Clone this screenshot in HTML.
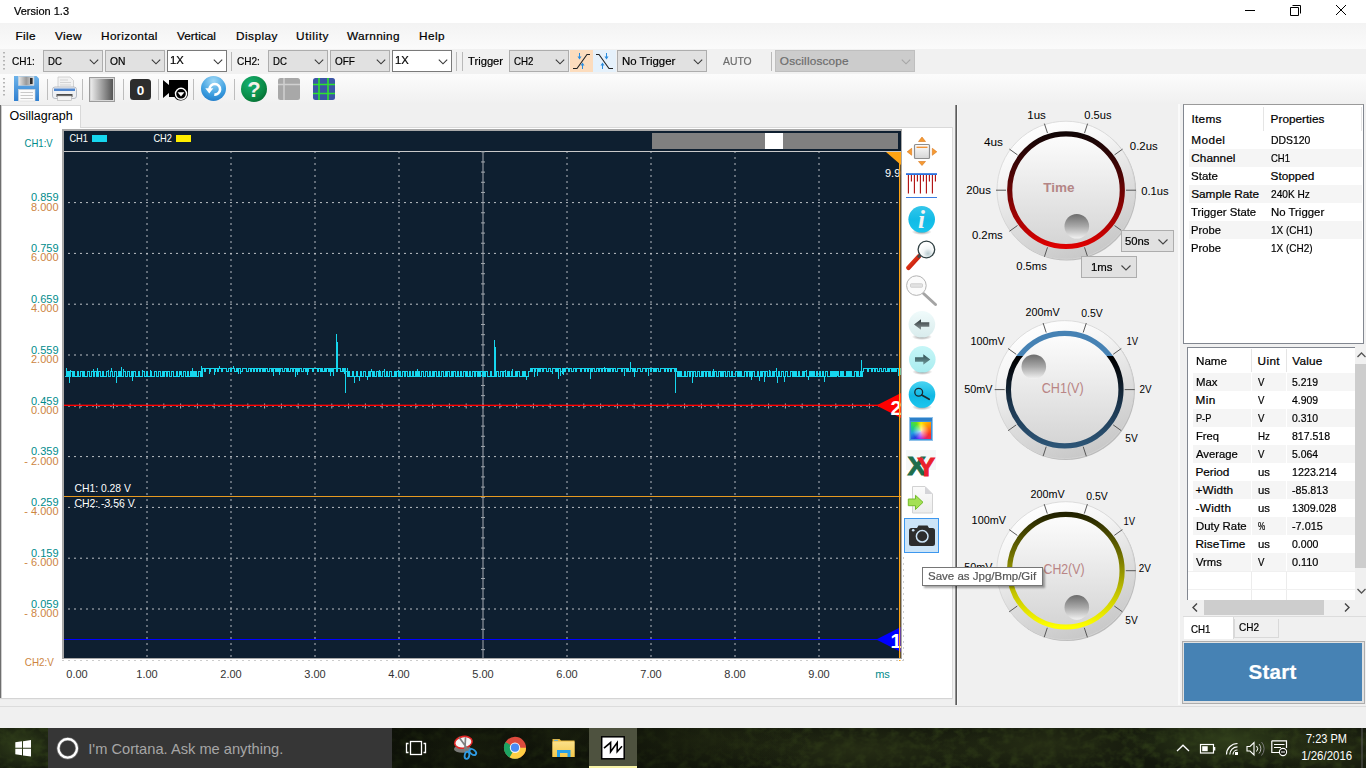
<!DOCTYPE html>
<html>
<head>
<meta charset="utf-8">
<title>Version 1.3</title>
<style>
*{box-sizing:border-box;margin:0;padding:0}
html,body{width:1366px;height:768px;overflow:hidden;background:#f0f0f0;font-family:"Liberation Sans",sans-serif;font-size:12px;color:#000}
.abs{position:absolute}
#root{position:absolute;left:0;top:0;width:1366px;height:768px;overflow:hidden;background:#f0f0f0}
.t{position:absolute;white-space:nowrap;line-height:14px;-webkit-text-stroke:.22px currentColor}
/* title */
#title{left:0;top:0;width:1366px;height:23px;background:#fff}
/* menu */
#menu{left:0;top:23px;width:1366px;height:26px;background:linear-gradient(#f3f3f3,#fbfbfb)}
#menu .t{top:6px;font-size:12.5px;letter-spacing:.45px}
/* toolbar1 */
#tb1{left:0;top:49px;width:1366px;height:25px;background:#f1f1f1}
#tb2{left:0;top:74px;width:1366px;height:30px;background:linear-gradient(#fcfcfc,#f0f0f0)}
.cb{position:absolute;top:1px;height:22px;border:1px solid #adadad;background:#e1e1e1;font-size:12px;line-height:20px;padding-left:4px}
.cb.w{background:#fff;border-color:#7a7a7a;line-height:17px;padding-left:2px}
.cb.dis{background:#cccccc;border-color:#bfbfbf;color:#6d6d6d}
.cb svg{position:absolute;right:3.5px;top:8px}
.sep{position:absolute;width:1px;background:#b9b9b9}
.grip{position:absolute;width:2px;}
</style>
</head>
<body>
<div id="root">

<!-- TITLE BAR -->
<div id="title" class="abs">
<div class="t" style="left:14.3px;top:3.91px;font-size:11.8px;line-height:15px;transform:scaleX(0.9316);transform-origin:0 50%;">Version 1.3</div>
<svg class="abs" style="left:1240px;top:0" width="126" height="23" viewBox="0 0 126 23">
    <path d="M5 10.5H15" stroke="#000" stroke-width="1" fill="none"/>
    <path d="M52.5 5.5H60.5V13.5 M50.5 7.5H58.5V15.5H50.5Z" stroke="#000" stroke-width="1" fill="none"/>
    <path d="M96 5L106 15M106 5L96 15" stroke="#000" stroke-width="1" fill="none"/>
  </svg>
</div>
<div id="menu" class="abs">
<div class="t" style="left:15.5px;top:5.61px;font-size:11.8px;line-height:15px;letter-spacing:0.329px;">File</div>
<div class="t" style="left:55.0px;top:5.61px;font-size:11.8px;line-height:15px;letter-spacing:0.379px;">View</div>
<div class="t" style="left:101.0px;top:5.61px;font-size:11.8px;line-height:15px;letter-spacing:0.375px;">Horizontal</div>
<div class="t" style="left:177.0px;top:5.61px;font-size:11.8px;line-height:15px;letter-spacing:0.043px;">Vertical</div>
<div class="t" style="left:236.0px;top:5.61px;font-size:11.8px;line-height:15px;letter-spacing:0.468px;">Display</div>
<div class="t" style="left:296.0px;top:5.61px;font-size:11.8px;line-height:15px;letter-spacing:0.609px;">Utility</div>
<div class="t" style="left:347.0px;top:5.61px;font-size:11.8px;line-height:15px;letter-spacing:0.348px;">Warnning</div>
<div class="t" style="left:419.0px;top:5.61px;font-size:11.8px;line-height:15px;letter-spacing:0.410px;">Help</div>
</div>
<div id="tb1" class="abs">
<svg class="abs" style="left:3px;top:3px" width="2" height="20"><g fill="#b5b5b5"><rect y="0" width="2" height="1.5"/><rect y="4" width="2" height="1.5"/><rect y="8" width="2" height="1.5"/><rect y="12" width="2" height="1.5"/><rect y="16" width="2" height="1.5"/></g></svg>
<div class="t" style="left:11.9px;top:5.21px;font-size:11.8px;line-height:15px;transform:scaleX(0.8518);transform-origin:0 50%;">CH1:</div>
<div class="cb " style="left:43px;width:60px"><svg width="10" height="6" viewBox="0 0 10 6"><path d="M0.8 0.6L5 4.800L9.200 0.600" stroke="#3a3a3a" stroke-width="1.150" fill="none"/></svg></div><div class="t" style="left:47.8px;top:5.21px;font-size:11.8px;line-height:15px;transform:scaleX(0.8156);transform-origin:0 50%;">DC</div>
<div class="cb " style="left:105px;width:60px"><svg width="10" height="6" viewBox="0 0 10 6"><path d="M0.8 0.6L5 4.800L9.200 0.600" stroke="#3a3a3a" stroke-width="1.150" fill="none"/></svg></div><div class="t" style="left:109.8px;top:5.21px;font-size:11.8px;line-height:15px;transform:scaleX(0.8701);transform-origin:0 50%;">ON</div>
<div class="cb w" style="left:167px;width:60px"><svg width="10" height="6" viewBox="0 0 10 6"><path d="M0.8 0.6L5 4.800L9.200 0.600" stroke="#3a3a3a" stroke-width="1.150" fill="none"/></svg></div><div class="t" style="left:170.3px;top:3.81px;font-size:11.8px;line-height:15px;transform:scaleX(0.9492);transform-origin:0 50%;">1X</div>
<div class="sep" style="left:231px;top:3px;height:19px"></div>
<div class="t" style="left:237.0px;top:5.21px;font-size:11.8px;line-height:15px;transform:scaleX(0.8518);transform-origin:0 50%;">CH2:</div>
<div class="cb " style="left:268px;width:60px"><svg width="10" height="6" viewBox="0 0 10 6"><path d="M0.8 0.6L5 4.800L9.200 0.600" stroke="#3a3a3a" stroke-width="1.150" fill="none"/></svg></div><div class="t" style="left:272.8px;top:5.21px;font-size:11.8px;line-height:15px;transform:scaleX(0.8156);transform-origin:0 50%;">DC</div>
<div class="cb " style="left:330px;width:60px"><svg width="10" height="6" viewBox="0 0 10 6"><path d="M0.8 0.6L5 4.800L9.200 0.600" stroke="#3a3a3a" stroke-width="1.150" fill="none"/></svg></div><div class="t" style="left:334.8px;top:5.21px;font-size:11.8px;line-height:15px;transform:scaleX(0.8434);transform-origin:0 50%;">OFF</div>
<div class="cb w" style="left:392px;width:60px"><svg width="10" height="6" viewBox="0 0 10 6"><path d="M0.8 0.6L5 4.800L9.200 0.600" stroke="#3a3a3a" stroke-width="1.150" fill="none"/></svg></div><div class="t" style="left:395.3px;top:3.81px;font-size:11.8px;line-height:15px;transform:scaleX(0.9492);transform-origin:0 50%;">1X</div>
<div class="sep" style="left:456px;top:3px;height:19px"></div><div class="sep" style="left:462px;top:3px;height:19px"></div>
<div class="t" style="left:468.3px;top:5.21px;font-size:11.8px;line-height:15px;transform:scaleX(0.9502);transform-origin:0 50%;">Trigger</div>
<div class="cb " style="left:509px;width:60px"><svg width="10" height="6" viewBox="0 0 10 6"><path d="M0.8 0.6L5 4.800L9.200 0.600" stroke="#3a3a3a" stroke-width="1.150" fill="none"/></svg></div><div class="t" style="left:513.8px;top:5.21px;font-size:11.8px;line-height:15px;transform:scaleX(0.8218);transform-origin:0 50%;">CH2</div>
<div class="abs" style="left:570px;top:1px;width:23px;height:22px;background:#fcdcbd"></div>
  <div class="abs" style="left:593px;top:1px;width:23px;height:22px;background:#e5f1fb"></div>
  <svg class="abs" style="left:570px;top:1px" width="46" height="22" viewBox="0 0 46 22">
    <path d="M3 18.5H7L17 4.5H20" stroke="#222" stroke-width="1.1" fill="none"/>
    <path d="M9.5 3V8M12.5 19V14" stroke="#2a8de0" stroke-width="1" fill="none"/>
    <path d="M7.5 6.5L9.5 9.5L11.5 6.5Z M10.5 15.5L12.5 12.5L14.5 15.5Z" fill="#2a8de0"/>
    <path d="M26 4.5H29L39 18.5H43" stroke="#222" stroke-width="1.1" fill="none"/>
    <path d="M36.500 3V8M32.500 19V14" stroke="#2a8de0" stroke-width="1" fill="none"/>
    <path d="M34.500 6.500L36.500 9.500L38.500 6.500Z M30.500 15.500L32.500 12.500L34.500 15.500Z" fill="#2a8de0"/>
  </svg>
<div class="cb " style="left:617px;width:90px"><svg width="10" height="6" viewBox="0 0 10 6"><path d="M0.8 0.6L5 4.800L9.200 0.600" stroke="#3a3a3a" stroke-width="1.150" fill="none"/></svg></div><div class="t" style="left:621.8px;top:5.21px;font-size:11.8px;line-height:15px;transform:scaleX(0.9675);transform-origin:0 50%;">No Trigger</div>
<div class="t" style="left:723.1px;top:5.21px;font-size:11.8px;line-height:15px;transform:scaleX(0.8813);transform-origin:0 50%;color:#6d6d6d;">AUTO</div>
<div class="sep" style="left:771px;top:3px;height:19px"></div>
<div class="cb dis" style="left:775px;width:140px"><svg width="10" height="6" viewBox="0 0 10 6"><path d="M0.8 0.6L5 4.800L9.200 0.600" stroke="#a6a6a6" stroke-width="1.150" fill="none"/></svg></div><div class="t" style="left:779.8px;top:5.21px;font-size:11.8px;line-height:15px;letter-spacing:0.173px;color:#6d6d6d;">Oscilloscope</div>
</div>
<!-- TOOLBAR 2 -->
<div id="tb2" class="abs">
  <svg class="abs" style="left:0;top:0" width="345" height="30" viewBox="0 74 345 30">
    <defs>
      <linearGradient id="gsave" x1="0" y1="0" x2="0" y2="1"><stop offset="0" stop-color="#6db3ea"/><stop offset="1" stop-color="#2f7fd0"/></linearGradient>
      <linearGradient id="ggrey" x1="0" y1="0" x2="1" y2="0"><stop offset="0" stop-color="#f4f4f4"/><stop offset="1" stop-color="#4a4a4a"/></linearGradient>
      <linearGradient id="gmetal" x1="0" y1="0" x2="1" y2="0"><stop offset="0" stop-color="#e8e8e8"/><stop offset=".5" stop-color="#9a9a9a"/><stop offset="1" stop-color="#e0e0e0"/></linearGradient>
      <radialGradient id="gblue" cx=".5" cy=".2" r=".9"><stop offset="0" stop-color="#9fd8f6"/><stop offset=".6" stop-color="#3d9fe0"/><stop offset="1" stop-color="#1b74c4"/></radialGradient>
      <radialGradient id="ggreen" cx=".35" cy=".3" r=".8"><stop offset="0" stop-color="#14b070"/><stop offset=".7" stop-color="#0a8a45"/><stop offset="1" stop-color="#056a30"/></radialGradient>
    </defs>
    <g fill="#b5b5b5"><rect x="3" y="78" width="2" height="1.5"/><rect x="3" y="82" width="2" height="1.5"/><rect x="3" y="86" width="2" height="1.5"/><rect x="3" y="90" width="2" height="1.5"/><rect x="3" y="94" width="2" height="1.5"/></g>
    <!-- save -->
    <path d="M14 76H36.500L39 78.500V101H14Z" fill="url(#gsave)"/>
    <rect x="18.500" y="76.500" width="15.500" height="9" fill="url(#gmetal)" stroke="#cfd8e0" stroke-width=".5"/>
    <rect x="30" y="78" width="2.600" height="6" fill="#2b2b2b"/>
    <rect x="18.500" y="89.500" width="16.500" height="11.500" fill="#fbfbfb" stroke="#d5d5d5" stroke-width=".6"/>
    <path d="M20.500 92.500H33M20.500 95.500H33M20.500 98.500H33" stroke="#c9c9c9" stroke-width="1"/>
    <!-- printer -->
    <path d="M58 77H70L73.500 80.500V88H58Z" fill="#f2f2f2" stroke="#c4c4c4" stroke-width=".7"/>
    <path d="M60 80H68M60 82.500H71M60 85H71" stroke="#d4d4d4" stroke-width="1"/>
    <rect x="52.500" y="87" width="24" height="11.500" rx="2.500" fill="#eef0f3" stroke="#a9b0ba" stroke-width=".8"/>
    <rect x="54" y="88.500" width="21" height="2.500" fill="#4f86cf"/>
    <rect x="56.500" y="94" width="16" height="3" fill="#4c4c4c"/>
    <rect x="57.500" y="96" width="14" height="4.500" fill="#f4f4f4" stroke="#b5b5b5" stroke-width=".6"/>
    <!-- gradient square -->
    <rect x="89.500" y="77.500" width="25" height="24" fill="url(#ggrey)" stroke="#9c9c9c" stroke-width="1"/>
    <rect x="90.500" y="78.500" width="23" height="22" fill="none" stroke="#d9d9d9" stroke-width="1"/>
    <!-- 0 -->
    <rect x="130" y="79" width="21" height="21" rx="3.500" fill="#2d2d2d"/>
    <text x="140.500" y="94.500" font-family="Liberation Sans, sans-serif" font-size="13.500" font-weight="bold" fill="#fff" text-anchor="middle">0</text>
    <!-- camera -->
    <path d="M163 80L169 85V80H188V93A7 7 0 0 1 181 100.500A7 7 0 0 1 174.500 97H169V93L163 98Z" fill="#000"/>
    <circle cx="181" cy="93.800" r="5.500" fill="#000" stroke="#fff" stroke-width="1.400"/>
    <path d="M177.600 92.200H184.400L181 96.600Z" fill="#fff"/>
    <!-- refresh -->
    <circle cx="213.500" cy="88.500" r="12.500" fill="url(#gblue)"/>
    <path d="M209.500 89.500A5.300 5.300 0 1 1 214.300 94.600" stroke="#fff" stroke-width="2.600" fill="none"/>
    <path d="M205.300 88.300H213.300L209.300 93.600Z" fill="#fff"/>
    <!-- help -->
    <circle cx="254" cy="89" r="13" fill="url(#ggreen)"/>
    <text x="254" y="96.500" font-family="Liberation Sans, sans-serif" font-size="22" font-weight="bold" fill="#f4f1ea" text-anchor="middle">?</text>
    <!-- table -->
    <rect x="278" y="78" width="22" height="22" rx="2.500" fill="#a8a8a8"/>
    <path d="M278 84.500H300M284 78V100" stroke="#d0d0d0" stroke-width="1.500"/>
    <!-- grid -->
    <rect x="313" y="78" width="22" height="22" rx="2.500" fill="#3b55a6"/>
    <path d="M313 84.500H335M313 93.500H335M319 78V100M328 78V100" stroke="#2ee22e" stroke-width="1.600"/>
    <!-- seps -->
    <path d="M47.500 79V100M82.500 79V100M123.500 79V100M158.500 79V100M193.500 79V100M234.500 79V100" stroke="#bdbdbd" stroke-width="1"/>
  </svg>
</div>

<!-- MAIN LEFT -->
<div id="left" class="abs" style="left:0;top:104px;width:956px;height:601px">
<svg class="abs" style="left:0;top:0" width="956" height="601" viewBox="0 104 956 601" shape-rendering="crispEdges">
<rect x="0" y="127" width="956" height="578" fill="#fff"/>
<rect x="0" y="104" width="956" height="23" fill="#f0f0f0"/>
<rect x="2" y="105" width="78" height="23" fill="#fff"/>
<path d="M80.500 105V127.500H952" stroke="#d9d9d9" stroke-width="1" fill="none"/>
<path d="M2 105.500H80" stroke="#d9d9d9" stroke-width="1" fill="none"/>
<rect x="0" y="105" width="1" height="595" fill="#6e6e6e"/><rect x="1" y="105" width="1" height="595" fill="#cfcfcf"/>
<rect x="0" y="698" width="955" height="1" fill="#d4d4d4"/><rect x="0" y="699" width="955" height="1" fill="#ececec"/><rect x="0" y="700" width="956" height="5" fill="#f0f0f0"/>
<rect x="952" y="127" width="1" height="572" fill="#dcdcdc"/><rect x="953" y="104" width="3" height="601" fill="#f0f0f0"/><rect x="955" y="105" width="1" height="601" fill="#8e8e8e"/>
<rect x="62" y="129" width="840" height="530" fill="#a9a9a9"/>
<rect x="64" y="131" width="837" height="527" fill="#0e1f30"/>
<clipPath id="pc"><rect x="64" y="131" width="837" height="527"/></clipPath>
<g clip-path="url(#pc)">
<g shape-rendering="auto">
<path d="M147 151V660" stroke="#b4b9bf" stroke-width="1" stroke-dasharray="2 4" fill="none"/>
<path d="M231 151V660" stroke="#b4b9bf" stroke-width="1" stroke-dasharray="2 4" fill="none"/>
<path d="M315 151V660" stroke="#b4b9bf" stroke-width="1" stroke-dasharray="2 4" fill="none"/>
<path d="M399 151V660" stroke="#b4b9bf" stroke-width="1" stroke-dasharray="2 4" fill="none"/>
<path d="M567 151V660" stroke="#b4b9bf" stroke-width="1" stroke-dasharray="2 4" fill="none"/>
<path d="M651 151V660" stroke="#b4b9bf" stroke-width="1" stroke-dasharray="2 4" fill="none"/>
<path d="M735 151V660" stroke="#b4b9bf" stroke-width="1" stroke-dasharray="2 4" fill="none"/>
<path d="M819 151V660" stroke="#b4b9bf" stroke-width="1" stroke-dasharray="2 4" fill="none"/>
<path d="M62 202.6H900" stroke="#bcc0c5" stroke-width="1" stroke-dasharray="2 4" fill="none"/>
<path d="M62 253.4H900" stroke="#bcc0c5" stroke-width="1" stroke-dasharray="2 4" fill="none"/>
<path d="M62 304.2H900" stroke="#bcc0c5" stroke-width="1" stroke-dasharray="2 4" fill="none"/>
<path d="M62 355.0H900" stroke="#bcc0c5" stroke-width="1" stroke-dasharray="2 4" fill="none"/>
<path d="M62 456.6H900" stroke="#bcc0c5" stroke-width="1" stroke-dasharray="2 4" fill="none"/>
<path d="M62 507.4H900" stroke="#bcc0c5" stroke-width="1" stroke-dasharray="2 4" fill="none"/>
<path d="M62 558.2H900" stroke="#bcc0c5" stroke-width="1" stroke-dasharray="2 4" fill="none"/>
<path d="M62 609.0H900" stroke="#bcc0c5" stroke-width="1" stroke-dasharray="2 4" fill="none"/>
</g>
<rect x="64" y="151" width="837" height="1" fill="#c9c9c9"/>
<g shape-rendering="auto">
<path d="M483 152V660" stroke="#a6abb2" stroke-width="1" fill="none"/>
<path d="M481 151.80H485M481 161.96H485M481 172.12H485M481 182.28H485M481 192.44H485M481 202.60H485M481 212.76H485M481 222.92H485M481 233.08H485M481 243.24H485M481 253.40H485M481 263.56H485M481 273.72H485M481 283.88H485M481 294.04H485M481 304.20H485M481 314.36H485M481 324.52H485M481 334.68H485M481 344.84H485M481 355.00H485M481 365.16H485M481 375.32H485M481 385.48H485M481 395.64H485M481 405.80H485M481 415.96H485M481 426.12H485M481 436.28H485M481 446.44H485M481 456.60H485M481 466.76H485M481 476.92H485M481 487.08H485M481 497.24H485M481 507.40H485M481 517.56H485M481 527.72H485M481 537.88H485M481 548.04H485M481 558.20H485M481 568.36H485M481 578.52H485M481 588.68H485M481 598.84H485M481 609.00H485M481 619.16H485M481 629.32H485M481 639.48H485M481 649.64H485M481 659.80H485" stroke="#a2a8af" stroke-width="1" fill="none"/>
<path d="M63.00 403.5V408.500M79.80 403.5V408.500M96.60 403.5V408.500M113.40 403.5V408.500M130.20 403.5V408.500M147.00 403.5V408.500M163.80 403.5V408.500M180.60 403.5V408.500M197.40 403.5V408.500M214.20 403.5V408.500M231.00 403.5V408.500M247.80 403.5V408.500M264.60 403.5V408.500M281.40 403.5V408.500M298.20 403.5V408.500M315.00 403.5V408.500M331.80 403.5V408.500M348.60 403.5V408.500M365.40 403.5V408.500M382.20 403.5V408.500M399.00 403.5V408.500M415.80 403.5V408.500M432.60 403.5V408.500M449.40 403.5V408.500M466.20 403.5V408.500M483.00 403.5V408.500M499.80 403.5V408.500M516.60 403.5V408.500M533.40 403.5V408.500M550.20 403.5V408.500M567.00 403.5V408.500M583.80 403.5V408.500M600.60 403.5V408.500M617.40 403.5V408.500M634.20 403.5V408.500M651.00 403.5V408.500M667.80 403.5V408.500M684.60 403.5V408.500M701.40 403.5V408.500M718.20 403.5V408.500M735.00 403.5V408.500M751.80 403.5V408.500M768.60 403.5V408.500M785.40 403.5V408.500M802.20 403.5V408.500M819.00 403.5V408.500M835.80 403.5V408.500M852.60 403.5V408.500M869.40 403.5V408.500M886.20 403.5V408.500M903.00 403.5V408.500" stroke="#a8adb4" stroke-width="1" fill="none"/>
<path d="M62 406.300H900" stroke="#9298a0" stroke-width="1" stroke-dasharray="2 4" fill="none"/>
</g>
<rect x="64" y="404" width="837" height="1" fill="#ff0000" opacity=".35"/><rect x="64" y="405" width="837" height="1" fill="#ff0000"/>
<rect x="64" y="496" width="837" height="1" fill="#e79a21"/>
<rect x="64" y="639" width="837" height="1.300" fill="#0000ff"/>
<rect x="652" y="133" width="246" height="16" fill="#808080"/><rect x="765" y="133" width="18" height="16" fill="#fff"/>
<path d="M64.5 376.5V376.5H65.5H66.5V371.5V367.5V371.5H67.5V376.5H68.5V371.5H69.5V376.5V382.5V376.5H70.5V371.5V369.5V371.5H71.5H72.5V376.5H73.5V371.5H74.5V376.5H75.5H76.5H77.5V371.5V375.5V371.5H78.5V376.5H79.5H80.5V371.5H81.5H82.5V376.5H83.5V371.5H84.5V376.5H85.5H86.5H87.5V371.5H88.5H89.5V376.5H90.5H91.5V371.5H92.5H93.5V376.5V368.5V376.5H94.5V371.5H95.5H96.5V376.5H97.5V367.5V376.5H98.5V371.5H99.5H100.5V376.5H101.5H102.5V371.5H103.5V376.5H104.5H105.5H106.5V371.5H107.5H108.5V376.5V369.5V376.5H109.5H110.5V371.5H111.5V367.5V371.5H112.5V376.5H113.5H114.5V371.5H115.5H116.5V376.5V382.5V376.5H117.5H118.5V371.5H119.5V376.5H120.5V371.5H121.5V376.5V366.5V376.5H122.5H123.5V371.5V368.5V371.5H124.5H125.5V376.5H126.5H127.5V371.5H128.5H129.5V376.5H130.5H131.5V371.5H132.5V376.5V380.5V376.5H133.5V371.5H134.5H135.5V376.5H136.5H137.5H138.5V371.5H139.5V376.5H140.5H141.5H142.5V371.5V369.5V371.5H143.5H144.5V376.5H145.5H146.5V371.5H147.5V376.5H148.5H149.5H150.5V371.5V369.5V371.5H151.5V376.5H152.5H153.5H154.5V371.5H155.5H156.5V376.5H157.5H158.5V371.5H159.5H160.5V376.5H161.5H162.5V371.5H163.5V376.5H164.5V371.5H165.5H166.5V376.5H167.5V371.5H168.5H169.5V376.5H170.5H171.5V371.5H172.5H173.5V376.5H174.5H175.5H176.5V371.5H177.5V376.5H178.5H179.5V371.5H180.5V374.5V371.5H181.5V376.5H182.5H183.5V371.5H184.5H185.5V376.5H186.5H187.5V371.5H188.5V376.5H189.5H190.5V371.5H191.5V376.5H192.5V367.5V376.5H193.5V371.5H194.5V376.5H195.5V371.5H196.5V376.5H197.5H198.5V371.5H199.5H200.5V376.5H201.5V371.5V366V371.5H202.5V368.5V376.5V368.5H203.5H204.5V371.5H205.5V368.5H206.5H207.5H208.5H209.5V371.5V373.5V371.5H210.5V368.5H211.5H212.5H213.5H214.5V371.5V374.5V371.5H215.5V368.5H216.5H217.5V371.5H218.5V368.5H219.5V365.5V368.5H220.5H221.5V371.5H222.5V368.5H223.5H224.5H225.5H226.5V371.5H227.5H228.5V368.5H229.5H230.5V371.5H231.5V368.5H232.5H233.5V365.5V368.5H234.5V371.5H235.5H236.5V368.5H237.5V371.5H238.5V368.5V373.5V368.5H239.5H240.5V371.5V373.5V371.5H241.5H242.5V368.5H243.5H244.5H245.5H246.5V371.5H247.5H248.5V368.5H249.5H250.5V371.5H251.5V368.5H252.5H253.5V371.5H254.5V368.5H255.5H256.5V371.5H257.5V368.5H258.5H259.5V371.5H260.5V368.5H261.5H262.5V371.5H263.5V368.5H264.5V371.5H265.5V368.5H266.5H267.5V371.5H268.5H269.5V368.5H270.5H271.5V371.5H272.5V368.5H273.5V375.5V368.5H274.5H275.5V371.5H276.5V368.5H277.5V371.5H278.5V368.5H279.5V371.5V374.5V371.5H280.5V368.5H281.5H282.5V371.5H283.5H284.5V368.5H285.5H286.5V371.5H287.5V368.5H288.5V371.5H289.5H290.5V368.5H291.5H292.5V371.5H293.5V368.5H294.5H295.5V371.5V376.5V371.5H296.5V368.5H297.5V374.5V368.5H298.5V371.5H299.5V368.5V367.5V368.5H300.5H301.5V371.5H302.5H303.5V368.5H304.5H305.5V371.5H306.5V368.5H307.5V371.5V374.5V371.5H308.5V368.5H309.5H310.5H311.5H312.5V371.5H313.5V368.5H314.5H315.5H316.5H317.5V371.5H318.5V368.5H319.5H320.5V371.5H321.5V368.5H322.5V371.5H323.5H324.5V368.5H325.5V371.5H326.5V368.5H327.5H328.5V371.5H329.5V368.5H330.5V375.5V368.5H331.5V371.5H332.5V368.5H333.5V375.5V368.5H334.5H335.5H336.5V371.5V333.5V371.5H337.5V368.5V341.5V368.5H338.5H339.5H340.5V371.5H341.5H342.5V368.5H343.5V371.5H344.5V368.5V373.5V368.5H345.5V371.5V392.5V371.5H346.5H347.5V376.5V367.5V376.5H348.5V371.5H349.5V376.5H350.5H351.5H352.5V371.5H353.5V376.5H354.5V382.5V376.5H355.5H356.5V371.5H357.5V376.5H358.5H359.5V380.5V376.5H360.5V371.5V375.5V371.5H361.5V376.5H362.5H363.5V371.5H364.5H365.5V376.5H366.5H367.5V379.5V376.5H368.5V371.5H369.5V376.5H370.5V371.5H371.5V368.5V371.5H372.5V376.5H373.5V371.5H374.5V376.5H375.5H376.5V371.5H377.5H378.5V376.5H379.5V371.5V369.5V371.5H380.5V376.5H381.5H382.5V371.5H383.5H384.5V376.5V368.5V376.5H385.5H386.5V371.5H387.5V376.5H388.5H389.5V371.5H390.5H391.5V376.5H392.5H393.5H394.5V371.5H395.5V376.5H396.5V371.5H397.5H398.5V376.5V369.5V376.5H399.5V371.5H400.5V376.5H401.5H402.5V371.5H403.5H404.5V376.5H405.5V371.5H406.5H407.5V376.5H408.5H409.5V371.5H410.5V376.5H411.5H412.5V371.5H413.5V376.5H414.5H415.5V371.5H416.5V376.5H417.5V368.5V376.5H418.5V371.5H419.5V376.5H420.5H421.5V371.5H422.5H423.5V376.5H424.5H425.5V371.5H426.5H427.5V376.5H428.5H429.5V371.5H430.5V376.5H431.5H432.5V371.5H433.5V376.5H434.5V371.5H435.5H436.5V376.5H437.5H438.5V371.5H439.5V376.5H440.5H441.5V371.5H442.5H443.5V376.5H444.5H445.5V371.5H446.5V376.5H447.5V371.5H448.5H449.5V376.5H450.5H451.5V371.5H452.5V376.5H453.5V371.5H454.5H455.5V376.5H456.5H457.5V371.5H458.5V376.5H459.5H460.5V371.5H461.5V376.5H462.5H463.5V371.5H464.5H465.5V376.5H466.5V371.5H467.5V376.5H468.5H469.5V371.5H470.5V376.5H471.5H472.5V371.5H473.5H474.5V376.5H475.5V371.5H476.5H477.5V376.5H478.5V371.5H479.5V376.5H480.5V371.5H481.5H482.5V376.5H483.5V371.5H484.5V376.5H485.5V371.5H486.5H487.5V376.5H488.5H489.5H490.5V371.5H491.5V376.5H492.5H493.5H494.5V371.5V339.5V371.5H495.5V376.5V346.5V376.5H496.5V371.5H497.5H498.5V376.5H499.5H500.5V371.5H501.5H502.5V376.5H503.5V371.5V375.5V371.5H504.5H505.5V376.5V369.5V376.5H506.5H507.5V371.5H508.5V376.5V371.5H509.5V376.5H510.5H511.5V371.5H512.5V376.5V368.5V376.5H513.5H514.5H515.5V371.5H516.5V376.5H517.5V371.5H518.5H519.5V376.5H520.5H521.5H522.5V371.5H523.5V376.5H524.5V371.5H525.5V376.5H526.5V379.5V376.5H527.5H528.5V371.5H529.5H530.5V368.5H531.5V371.5H532.5V368.5H533.5H534.5V371.5V376.5V371.5H535.5V368.5H536.5H537.5V371.5V375.5V371.5H538.5V368.5H539.5V371.5H540.5V368.5H541.5H542.5V371.5H543.5V368.5H544.5H545.5H546.5V371.5H547.5H548.5V368.5H549.5H550.5V371.5H551.5H552.5V368.5V373.5V368.5H553.5H554.5H555.5V371.5H556.5V368.5H557.5V371.5H558.5V368.5V378.5V368.5H559.5H560.5V371.5V375.5V371.5H561.5H562.5V368.5V373.5V368.5H563.5V374.5V368.5H564.5V371.5H565.5V368.5H566.5H567.5H568.5V371.5H569.5V368.5H570.5H571.5V371.5H572.5H573.5V368.5H574.5H575.5V371.5H576.5V368.5H577.5H578.5H579.5H580.5V371.5H581.5V368.5H582.5H583.5H584.5V371.5H585.5V368.5H586.5H587.5V371.5H588.5V368.5H589.5H590.5V378.5V368.5H591.5V371.5H592.5V368.5H593.5H594.5V371.5H595.5H596.5V368.5H597.5H598.5V371.5H599.5V368.5H600.5H601.5V371.5H602.5V368.5H603.5H604.5V371.5V366.5V371.5H605.5V368.5H606.5H607.5V371.5H608.5V368.5H609.5V371.5H610.5V368.5H611.5H612.5V371.5H613.5V368.5H614.5H615.5V371.5H616.5H617.5V368.5H618.5H619.5H620.5H621.5V371.5H622.5V368.5H623.5H624.5V375.5V368.5H625.5H626.5V371.5H627.5V368.5H628.5V371.5H629.5H630.5V368.5V361.5V368.5H631.5H632.5V371.5H633.5V368.5H634.5V376.5V368.5H635.5V371.5H636.5H637.5V368.5H638.5H639.5H640.5V371.5H641.5H642.5V368.5H643.5H644.5H645.5V371.5H646.5V368.5H647.5H648.5V375.5V368.5H649.5H650.5V371.5H651.5V368.5H652.5H653.5V371.5H654.5V368.5H655.5V371.5H656.5V368.5H657.5V367.5V368.5H658.5V371.5H659.5H660.5V368.5H661.5H662.5H663.5H664.5V371.5H665.5V368.5H666.5H667.5V371.5H668.5V368.5H669.5H670.5V371.5H671.5V368.5H672.5H673.5H674.5V371.5H675.5V368.5V392.5V368.5H676.5V371.5H677.5V376.5H678.5V371.5H679.5V376.5H680.5V371.5H681.5V376.5H682.5H683.5H684.5V371.5V374.5V371.5H685.5V376.5H686.5H687.5V371.5H688.5H689.5V376.5H690.5V371.5H691.5H692.5V376.5V382.5V376.5H693.5V371.5H694.5H695.5V376.5H696.5H697.5V371.5H698.5H699.5V376.5H700.5H701.5V371.5V375.5V371.5H702.5V376.5H703.5V371.5H704.5H705.5V376.5H706.5V371.5H707.5H708.5V376.5H709.5V371.5H710.5V376.5H711.5H712.5V371.5H713.5V376.5V368.5V376.5H714.5V371.5H715.5H716.5V376.5H717.5H718.5V371.5H719.5H720.5V376.5H721.5V371.5H722.5V376.5H723.5V371.5H724.5H725.5V376.5H726.5H727.5V371.5H728.5H729.5V376.5H730.5H731.5V371.5H732.5V376.5H733.5H734.5H735.5V371.5H736.5H737.5V376.5H738.5V371.5H739.5V376.5H740.5V371.5H741.5V376.5H742.5H743.5H744.5V371.5H745.5H746.5V376.5H747.5V371.5H748.5H749.5V376.5H750.5V371.5H751.5V376.5V379.5V376.5H752.5V371.5H753.5H754.5V376.5H755.5H756.5H757.5V371.5H758.5V376.5H759.5V380.5V376.5H760.5V371.5H761.5V376.5H762.5V371.5H763.5H764.5V376.5V381.5V376.5H765.5V371.5H766.5H767.5V376.5H768.5H769.5V371.5V369.5V371.5H770.5V376.5H771.5H772.5V371.5V375.5V371.5H773.5V376.5H774.5V371.5H775.5H776.5V376.5V367.5V376.5H777.5V382.5V376.5H778.5V371.5H779.5V376.5H780.5H781.5V371.5H782.5H783.5V376.5H784.5V381.5V376.5H785.5V371.5H786.5H787.5V376.5H788.5H789.5H790.5V371.5H791.5H792.5V376.5H793.5V371.5H794.5V376.5H795.5V371.5H796.5V376.5H797.5H798.5V371.5H799.5V376.5H800.5H801.5H802.5V371.5H803.5V376.5H804.5V371.5H805.5H806.5V376.5V369.5V376.5H807.5H808.5V379.5V376.5H809.5V371.5H810.5V376.5H811.5V371.5V374.5V371.5H812.5V376.5H813.5V371.5H814.5V376.5H815.5H816.5V371.5H817.5V376.5H818.5H819.5V371.5V374.5V371.5H820.5V376.5H821.5H822.5V371.5H823.5V376.5H824.5V381.5V376.5H825.5V371.5V376.5V371.5H826.5H827.5V376.5H828.5H829.5H830.5V371.5H831.5V376.5H832.5V371.5H833.5V376.5H834.5V371.5H835.5V376.5H836.5V371.5H837.5V375.5V371.5H838.5V376.5H839.5H840.5V371.5H841.5V376.5H842.5V371.5H843.5V376.5H844.5H845.5H846.5V371.5H847.5V376.5H848.5V371.5H849.5V376.5H850.5V371.5H851.5V376.5H852.5H853.5H854.5V371.5H855.5H856.5V376.5H857.5V371.5H858.5V376.5H859.5H860.5V371.5H861.5V376.5V359.5V376.5H862.5V371.5H863.5V368.5H864.5H865.5H866.5H867.5V371.5H868.5V368.5H869.5H870.5H871.5V371.5H872.5V368.5H873.5H874.5V371.5H875.5V368.5H876.5H877.5V371.5H878.5H879.5V368.5H880.5H881.5V371.5H882.5H883.5V368.5H884.5H885.5V371.5H886.5H887.5V368.5H888.5V371.5H889.5V368.5H890.5H891.5V371.5H892.5V368.5H893.5V371.5H894.5V368.5H895.5V371.5H896.5V368.5H897.5H898.5V375.5V368.5H899.5H900.5V371.5V374.5V371.5H901.5" stroke="#16d6ee" stroke-width="1" fill="none"/>
</g>
</svg>
<svg class="abs" style="left:0;top:0" width="956" height="601" viewBox="0 104 956 601">
<clipPath id="pc2"><rect x="64" y="131" width="837" height="527"/></clipPath><g clip-path="url(#pc2)">
<path d="M886 152H901V165Z" fill="#ffa414"/>
<path d="M876.400 405.600L901 393V418Z" fill="#ff0000"/>
<path d="M876.200 639.600L901 627V652Z" fill="#0000ff"/>
<text x="890.500" y="414.700" font-family="Liberation Sans, sans-serif" font-size="20" font-weight="bold" fill="#fff">2</text>
<text x="890.500" y="648" font-family="Liberation Sans, sans-serif" font-size="20" font-weight="bold" fill="#fff">1</text>
<text x="885" y="177" font-family="Liberation Sans, sans-serif" font-size="11" fill="#fff">9.9</text>
<rect x="899" y="152" width="1.400" height="507" fill="#ffa414"/>
</g>
<text x="69.4" y="142.3" font-family="Liberation Sans, sans-serif" font-size="10.5" textLength="18.5" lengthAdjust="spacingAndGlyphs" fill="#fff" text-anchor="start">CH1</text><rect x="92" y="135" width="15" height="7" fill="#16d6ee"/>
<text x="153.4" y="142.3" font-family="Liberation Sans, sans-serif" font-size="10.5" textLength="18.6" lengthAdjust="spacingAndGlyphs" fill="#fff" text-anchor="start">CH2</text><rect x="176" y="135" width="15" height="7" fill="#ffee00"/>
<text x="74.5" y="491.5" font-family="Liberation Sans, sans-serif" font-size="10.5" textLength="56.3" lengthAdjust="spacingAndGlyphs" fill="#fff" text-anchor="start">CH1: 0.28 V</text>
<text x="74.5" y="507.0" font-family="Liberation Sans, sans-serif" font-size="10.5" letter-spacing="-0.045" fill="#fff" text-anchor="start">CH2: -3.56 V</text>
<text x="24.6" y="147.0" font-family="Liberation Sans, sans-serif" font-size="10.5" textLength="28.1" lengthAdjust="spacingAndGlyphs" fill="#008b8b" text-anchor="start">CH1:V</text>
<text x="24.8" y="665.8" font-family="Liberation Sans, sans-serif" font-size="10.5" textLength="29.0" lengthAdjust="spacingAndGlyphs" fill="#cd853f" text-anchor="start">CH2:V</text>
<text x="58.500" y="201.4" text-anchor="end" font-family="Liberation Sans, sans-serif" font-size="11" fill="#008b8b">0.859</text>
<text x="58.500" y="210.5" text-anchor="end" font-family="Liberation Sans, sans-serif" font-size="11" fill="#cd853f">8.000</text>
<text x="58.500" y="252.2" text-anchor="end" font-family="Liberation Sans, sans-serif" font-size="11" fill="#008b8b">0.759</text>
<text x="58.500" y="261.3" text-anchor="end" font-family="Liberation Sans, sans-serif" font-size="11" fill="#cd853f">6.000</text>
<text x="58.500" y="303.0" text-anchor="end" font-family="Liberation Sans, sans-serif" font-size="11" fill="#008b8b">0.659</text>
<text x="58.500" y="312.1" text-anchor="end" font-family="Liberation Sans, sans-serif" font-size="11" fill="#cd853f">4.000</text>
<text x="58.500" y="353.8" text-anchor="end" font-family="Liberation Sans, sans-serif" font-size="11" fill="#008b8b">0.559</text>
<text x="58.500" y="362.9" text-anchor="end" font-family="Liberation Sans, sans-serif" font-size="11" fill="#cd853f">2.000</text>
<text x="58.500" y="404.6" text-anchor="end" font-family="Liberation Sans, sans-serif" font-size="11" fill="#008b8b">0.459</text>
<text x="58.500" y="413.7" text-anchor="end" font-family="Liberation Sans, sans-serif" font-size="11" fill="#cd853f">0.000</text>
<text x="58.500" y="455.4" text-anchor="end" font-family="Liberation Sans, sans-serif" font-size="11" fill="#008b8b">0.359</text>
<text x="58.500" y="464.5" text-anchor="end" font-family="Liberation Sans, sans-serif" font-size="11" fill="#cd853f">- 2.000</text>
<text x="58.500" y="506.2" text-anchor="end" font-family="Liberation Sans, sans-serif" font-size="11" fill="#008b8b">0.259</text>
<text x="58.500" y="515.3" text-anchor="end" font-family="Liberation Sans, sans-serif" font-size="11" fill="#cd853f">- 4.000</text>
<text x="58.500" y="557.0" text-anchor="end" font-family="Liberation Sans, sans-serif" font-size="11" fill="#008b8b">0.159</text>
<text x="58.500" y="566.1" text-anchor="end" font-family="Liberation Sans, sans-serif" font-size="11" fill="#cd853f">- 6.000</text>
<text x="58.500" y="607.8" text-anchor="end" font-family="Liberation Sans, sans-serif" font-size="11" fill="#008b8b">0.059</text>
<text x="58.500" y="616.9" text-anchor="end" font-family="Liberation Sans, sans-serif" font-size="11" fill="#cd853f">- 8.000</text>
<text x="77" y="678" text-anchor="middle" font-family="Liberation Sans, sans-serif" font-size="11" fill="#333">0.00</text>
<text x="147" y="678" text-anchor="middle" font-family="Liberation Sans, sans-serif" font-size="11" fill="#333">1.00</text>
<text x="231" y="678" text-anchor="middle" font-family="Liberation Sans, sans-serif" font-size="11" fill="#333">2.00</text>
<text x="315" y="678" text-anchor="middle" font-family="Liberation Sans, sans-serif" font-size="11" fill="#333">3.00</text>
<text x="399" y="678" text-anchor="middle" font-family="Liberation Sans, sans-serif" font-size="11" fill="#333">4.00</text>
<text x="483" y="678" text-anchor="middle" font-family="Liberation Sans, sans-serif" font-size="11" fill="#333">5.00</text>
<text x="567" y="678" text-anchor="middle" font-family="Liberation Sans, sans-serif" font-size="11" fill="#333">6.00</text>
<text x="651" y="678" text-anchor="middle" font-family="Liberation Sans, sans-serif" font-size="11" fill="#333">7.00</text>
<text x="735" y="678" text-anchor="middle" font-family="Liberation Sans, sans-serif" font-size="11" fill="#333">8.00</text>
<text x="819" y="678" text-anchor="middle" font-family="Liberation Sans, sans-serif" font-size="11" fill="#333">9.00</text>
<text x="882.500" y="678" text-anchor="middle" font-family="Liberation Sans, sans-serif" font-size="11" fill="#008b8b">ms</text>
<path d="M62 660.500H904" stroke="#cdcdcd" stroke-width="1" stroke-dasharray="2 4" fill="none" shape-rendering="crispEdges"/><path d="M903.500 557V660" stroke="#cdcdcd" stroke-width="1" stroke-dasharray="2 4" fill="none" shape-rendering="crispEdges"/><rect x="899" y="660" width="1.500" height="1" fill="#ffa414"/>
<text x="9.500" y="120" font-family="Liberation Sans, sans-serif" font-size="12.500" fill="#000">Osillagraph</text>
</svg>
<svg class="abs" style="left:901px;top:24px" width="52" height="440" viewBox="901 128 52 440">
<defs>
<linearGradient id="bxg" x1="0" y1="0" x2="0" y2="1"><stop offset="0" stop-color="#fdfdfd"/><stop offset="1" stop-color="#d6d6d6"/></linearGradient>
<linearGradient id="cy1" x1="0" y1="0" x2="0" y2="1"><stop offset="0" stop-color="#35c6ea"/><stop offset=".5" stop-color="#12bbe6"/><stop offset="1" stop-color="#19c4ec"/></linearGradient>
<linearGradient id="cy2" x1="0" y1="0" x2="0" y2="1"><stop offset="0" stop-color="#f0fbfb"/><stop offset="1" stop-color="#d9eced"/></linearGradient>
<linearGradient id="cy3" x1="0" y1="0" x2="0" y2="1"><stop offset="0" stop-color="#c6f6f7"/><stop offset="1" stop-color="#a9ecef"/></linearGradient>
<linearGradient id="cy4" x1="0" y1="0" x2="0" y2="1"><stop offset="0" stop-color="#4ad4f2"/><stop offset=".55" stop-color="#10b8e4"/><stop offset="1" stop-color="#1cc6ee"/></linearGradient>
<linearGradient id="arr" x1="0" y1="0" x2="0" y2="1"><stop offset="0" stop-color="#30383a"/><stop offset="1" stop-color="#8a9698"/></linearGradient>
<linearGradient id="arr2" x1="0" y1="0" x2="0" y2="1"><stop offset="0" stop-color="#2f4f52"/><stop offset="1" stop-color="#6f9a9c"/></linearGradient>
<radialGradient id="lens" cx=".6" cy=".75" r=".6"><stop offset="0" stop-color="#b9cbd0"/><stop offset=".5" stop-color="#f2f6f7"/><stop offset="1" stop-color="#ffffff"/></radialGradient>
<linearGradient id="redh" x1="0" y1="0" x2="1" y2="1"><stop offset="0" stop-color="#f04a20"/><stop offset="1" stop-color="#b80c08"/></linearGradient>
<radialGradient id="shd" cx=".5" cy=".5" r=".5"><stop offset="0" stop-color="#000" stop-opacity=".45"/><stop offset="1" stop-color="#000" stop-opacity="0"/></radialGradient>
<linearGradient id="pg" x1="0" y1="0" x2="0" y2="1"><stop offset="0" stop-color="#fbfbfb"/><stop offset="1" stop-color="#ececec"/></linearGradient>
</defs>
<rect x="914.500" y="144.500" width="15" height="14" rx="1" fill="url(#bxg)" stroke="#8e8e8e" stroke-width="1.200"/>
<path d="M916.500 147.300H927.500" stroke="#f0943a" stroke-width="1.400"/>
<g fill="#f59a32" stroke="#d9761a" stroke-width=".6"><path d="M922 137L925.500 141.500H918.500Z"/><path d="M922 165.500L925.500 161.500H918.500Z"/><path d="M907.200 151.800L911.700 148.300V155.300Z"/><path d="M936.800 151.800L932.300 148.300V155.300Z"/></g>
<rect x="906" y="173.200" width="31" height="1.800" fill="#2a6fdc"/><rect x="906" y="197" width="31" height="1" fill="#3b7de0"/>
<path d="M908.4 175V193.500M914.4 175V193.500M920.4 175V193.500M926.4 175V193.500M932.4 175V193.500M911.4 175V181.500M917.4 175V181.500M923.4 175V181.500M929.4 175V181.500M935.4 175V181.500" stroke="#b00c0c" stroke-width="1.100"/>
<ellipse cx="921.7" cy="231.8" rx="10" ry="3.200" fill="url(#shd)"/><circle cx="921.7" cy="219.3" r="13.300" fill="url(#cy1)"/>
<text x="921.500" y="228" text-anchor="middle" font-family="Liberation Serif, serif" font-style="italic" font-weight="bold" font-size="25" fill="#f4f4f4">i</text>
<path d="M918.800 256.500L908.500 267.800" stroke="url(#redh)" stroke-width="4.600" stroke-linecap="round"/>
<path d="M920.500 254.800L918 257.500" stroke="#4a4a4a" stroke-width="3"/>
<circle cx="926.400" cy="249.500" r="8.300" fill="url(#lens)" stroke="#2f3f42" stroke-width="1.300"/>
<path d="M923.500 293.500L935.500 304.500" stroke="#a4a4a4" stroke-width="3" stroke-linecap="round"/>
<circle cx="916.400" cy="285.600" r="9.800" fill="#fbfbfb" stroke="#b4b4b4" stroke-width="1"/>
<rect x="910.500" y="283.700" width="12" height="3.600" rx=".8" fill="#e2e2e2" stroke="#c4c4c4" stroke-width=".7"/>
<ellipse cx="921.9" cy="336.8" rx="10" ry="3.200" fill="url(#shd)"/><circle cx="921.9" cy="324.3" r="13.300" fill="url(#cy2)"/>
<path d="M914 324.500L921 319.300V322.300H929.300V326.700H921V329.700Z" fill="url(#arr)"/>
<ellipse cx="922.3" cy="371.8" rx="10" ry="3.200" fill="url(#shd)"/><circle cx="922.3" cy="359.3" r="13.300" fill="url(#cy3)"/>
<path d="M930.300 359.500L923.300 354.300V357.300H915V361.700H923.300V364.700Z" fill="url(#arr2)"/>
<ellipse cx="922" cy="407.0" rx="10" ry="3.200" fill="url(#shd)"/><circle cx="922" cy="394.5" r="13.300" fill="url(#cy4)"/>
<circle cx="918.700" cy="392.300" r="3.900" fill="none" stroke="#1a2a30" stroke-width="1.300"/><path d="M921.700 395L929.200 399.300" stroke="#1a2a30" stroke-width="1.700" stroke-linecap="round"/>
<rect x="906" y="450" width="30" height="20" fill="#f5f8f8"/>
<text x="907.500" y="475" font-family="Liberation Sans, sans-serif" font-weight="bold" font-size="25" fill="#1d6e4c" stroke="#1d6e4c" stroke-width=".9" textLength="18.500" lengthAdjust="spacingAndGlyphs">X</text>
<text x="917.200" y="476" font-family="Liberation Sans, sans-serif" font-weight="bold" font-size="25" fill="#ea1f2d" stroke="#ea1f2d" stroke-width=".9" textLength="18" lengthAdjust="spacingAndGlyphs">Y</text>
<path d="M912.500 486.500H925L932.500 494V513H912.500Z" fill="url(#pg)" stroke="#d2d2d2" stroke-width="1"/>
<path d="M925 486.500V494H932.500Z" fill="#d4d4d8"/>
<path d="M908.300 499H915.500V495.300L923 502.300L915.500 509.500V505.700H908.300Z" fill="#a4e055" stroke="#72bc28" stroke-width="1"/>
<rect x="904.500" y="518.500" width="34" height="34" fill="#cce4f7" stroke="#3d97ee" stroke-width="1"/>
<path d="M911.500 528H917L918.500 525.500H927.500L929 528H932.500Q935 528 935 530.500V543.500Q935 546 932.500 546H911.500Q909 546 909 543.500V530.500Q909 528 911.500 528Z" fill="#2d2d2d"/>
<circle cx="922.200" cy="536.300" r="5.800" fill="#2d2d2d" stroke="#cce4f7" stroke-width="1.500"/>
<circle cx="913.200" cy="530.300" r="1.300" fill="#cce4f7"/>
</svg>
<div class="abs" style="left:909px;top:313px;width:24px;height:24px;background:#3d93da;border:1px solid #8ec1ea"></div>
<div class="abs" style="left:910px;top:314px;width:22px;height:3px;background:#2d7fc8"></div>
<div class="abs" style="left:911px;top:318px;width:20px;height:17px;background:conic-gradient(from 0deg at 50% 55%,#ffe800,#ffa000 12%,#ff3020 30%,#e0207a 42%,#8a20ff 52%,#2040e0 62%,#20a0e0 72%,#20d080 82%,#60e020 92%,#ffe800)"></div>
<div class="abs" style="left:911px;top:318px;width:20px;height:17px;background:radial-gradient(circle at 50% 55%,rgba(255,255,255,.75),rgba(255,255,255,0) 60%)"></div>
</div>

<!-- RIGHT PANEL -->
<div id="right" class="abs" style="left:956px;top:104px;width:410px;height:601px">
<svg class="abs" style="left:0;top:0" width="410" height="601" viewBox="956 104 410 601">
<defs>
<linearGradient id="bez" x1="0.3" y1="0" x2="0.7" y2="1"><stop offset="0" stop-color="#ffffff"/><stop offset=".25" stop-color="#f6f6f6"/><stop offset=".6" stop-color="#dedede"/><stop offset="1" stop-color="#c6c6c6"/></linearGradient>
<linearGradient id="face" x1="0" y1="0" x2="0" y2="1"><stop offset="0" stop-color="#fdfdfd"/><stop offset="1" stop-color="#d4d4d4"/></linearGradient>
<linearGradient id="dimp" x1="0" y1="0" x2="0" y2="1"><stop offset="0" stop-color="#6c6c6c"/><stop offset=".5" stop-color="#a8a8a8"/><stop offset="1" stop-color="#f2f2f2"/></linearGradient>
<linearGradient id="rred" x1="0" y1="0" x2="0" y2="1"><stop offset="0" stop-color="#120606"/><stop offset=".35" stop-color="#4a0505"/><stop offset=".7" stop-color="#980404"/><stop offset="1" stop-color="#de0000"/></linearGradient>
<linearGradient id="rblu" x1="0" y1="0" x2="0" y2="1"><stop offset="0" stop-color="#4682b4"/><stop offset=".2" stop-color="#4682b4"/><stop offset=".2" stop-color="#000000"/><stop offset=".3" stop-color="#05080c"/><stop offset=".65" stop-color="#1c3750"/><stop offset="1" stop-color="#2d5576"/></linearGradient>
<linearGradient id="ryel" x1="0" y1="0" x2="0" y2="1"><stop offset="0" stop-color="#222200"/><stop offset=".35" stop-color="#6e6e00"/><stop offset=".7" stop-color="#c4c400"/><stop offset="1" stop-color="#ffff00"/></linearGradient>
</defs>
<circle cx="1066.9" cy="191.29999999999998" r="69.300" fill="#bcbcbc"/>
<circle cx="1066" cy="190.2" r="69" fill="url(#bez)" stroke="#d6d6d6" stroke-width=".8"/>
<path d="M1084.5 133.1L1087.6 123.6M1114.5 154.9L1122.6 149.1M1126.0 190.2L1136.0 190.2M1114.5 225.5L1122.6 231.3M1084.5 247.3L1087.6 256.8M1047.5 247.3L1044.4 256.8M1017.5 225.5L1009.4 231.3M1006.0 190.2L996.0 190.2M1017.5 154.9L1009.4 149.1M1047.5 133.1L1044.4 123.6" stroke="#4a4a4a" stroke-width=".9" fill="none"/>
<circle cx="1066" cy="190.2" r="56.300" fill="url(#face)" stroke="url(#rred)" stroke-width="5.200"/>

<circle cx="1076.8" cy="226.2" r="12.300" fill="url(#dimp)"/>
<circle cx="1065.6000000000001" cy="390.70000000000005" r="69.300" fill="#bcbcbc"/>
<circle cx="1064.7" cy="389.6" r="69" fill="url(#bez)" stroke="#d6d6d6" stroke-width=".8"/>
<path d="M1083.2 332.5L1086.3 323.0M1113.2 354.3L1121.3 348.5M1124.7 389.6L1134.7 389.6M1113.2 424.9L1121.3 430.7M1083.2 446.7L1086.3 456.2M1046.2 446.7L1043.1 456.2M1016.2 424.9L1008.1 430.7M1004.7 389.6L994.7 389.6M1016.2 354.3L1008.1 348.5M1046.2 332.5L1043.1 323.0" stroke="#4a4a4a" stroke-width=".9" fill="none"/>
<circle cx="1064.7" cy="389.6" r="56.300" fill="url(#face)" stroke="url(#rblu)" stroke-width="5.200"/>

<circle cx="1033.8" cy="366.8" r="12.300" fill="url(#dimp)"/>
<circle cx="1066.7" cy="571.8000000000001" r="69.300" fill="#bcbcbc"/>
<circle cx="1065.8" cy="570.7" r="69" fill="url(#bez)" stroke="#d6d6d6" stroke-width=".8"/>
<path d="M1084.3 513.6L1087.4 504.1M1114.3 535.4L1122.4 529.6M1125.8 570.7L1135.8 570.7M1114.3 606.0L1122.4 611.8M1084.3 627.8L1087.4 637.3M1047.3 627.8L1044.2 637.3M1017.3 606.0L1009.2 611.8M1005.8 570.7L995.8 570.7M1017.3 535.4L1009.2 529.6M1047.3 513.6L1044.2 504.1" stroke="#4a4a4a" stroke-width=".9" fill="none"/>
<circle cx="1065.8" cy="570.7" r="56.300" fill="url(#face)" stroke="url(#ryel)" stroke-width="5.200"/>

<circle cx="1076.8" cy="607.4" r="12.300" fill="url(#dimp)"/>
<text x="1027.3" y="118.7" font-family="Liberation Sans, sans-serif" font-size="11.8" textLength="18.6" lengthAdjust="spacingAndGlyphs" fill="#000" text-anchor="start">1us</text>
<text x="1084.3" y="118.7" font-family="Liberation Sans, sans-serif" font-size="11.8" textLength="27.2" lengthAdjust="spacingAndGlyphs" fill="#000" text-anchor="start">0.5us</text>
<text x="984.0" y="146.3" font-family="Liberation Sans, sans-serif" font-size="11.8" letter-spacing="-0.113" fill="#000" text-anchor="start">4us</text>
<text x="1129.8" y="150.0" font-family="Liberation Sans, sans-serif" font-size="11.8" textLength="27.9" lengthAdjust="spacingAndGlyphs" fill="#000" text-anchor="start">0.2us</text>
<text x="966.2" y="194.2" font-family="Liberation Sans, sans-serif" font-size="11.8" textLength="24.7" lengthAdjust="spacingAndGlyphs" fill="#000" text-anchor="start">20us</text>
<text x="1141.2" y="195.3" font-family="Liberation Sans, sans-serif" font-size="11.8" textLength="27.5" lengthAdjust="spacingAndGlyphs" fill="#000" text-anchor="start">0.1us</text>
<text x="971.9" y="239.1" font-family="Liberation Sans, sans-serif" font-size="11.8" textLength="30.9" lengthAdjust="spacingAndGlyphs" fill="#000" text-anchor="start">0.2ms</text>
<text x="1016.2" y="270.0" font-family="Liberation Sans, sans-serif" font-size="11.8" textLength="30.7" lengthAdjust="spacingAndGlyphs" fill="#000" text-anchor="start">0.5ms</text>
<text x="1025.6" y="316.2" font-family="Liberation Sans, sans-serif" font-size="11.8" textLength="34.2" lengthAdjust="spacingAndGlyphs" fill="#000" text-anchor="start">200mV</text>
<text x="1081.3" y="316.7" font-family="Liberation Sans, sans-serif" font-size="11.8" textLength="21.5" lengthAdjust="spacingAndGlyphs" fill="#000" text-anchor="start">0.5V</text>
<text x="970.4" y="345.0" font-family="Liberation Sans, sans-serif" font-size="11.8" textLength="34.4" lengthAdjust="spacingAndGlyphs" fill="#000" text-anchor="start">100mV</text>
<text x="1126.6" y="345.0" font-family="Liberation Sans, sans-serif" font-size="11.8" textLength="11.6" lengthAdjust="spacingAndGlyphs" fill="#000" text-anchor="start">1V</text>
<text x="964.2" y="392.7" font-family="Liberation Sans, sans-serif" font-size="11.8" textLength="28.2" lengthAdjust="spacingAndGlyphs" fill="#000" text-anchor="start">50mV</text>
<text x="1139.5" y="392.7" font-family="Liberation Sans, sans-serif" font-size="11.8" textLength="12.1" lengthAdjust="spacingAndGlyphs" fill="#000" text-anchor="start">2V</text>
<text x="1125.3" y="441.7" font-family="Liberation Sans, sans-serif" font-size="11.8" textLength="12.4" lengthAdjust="spacingAndGlyphs" fill="#000" text-anchor="start">5V</text>
<text x="1030.5" y="498.0" font-family="Liberation Sans, sans-serif" font-size="11.8" textLength="34.2" lengthAdjust="spacingAndGlyphs" fill="#000" text-anchor="start">200mV</text>
<text x="1086.2" y="500.2" font-family="Liberation Sans, sans-serif" font-size="11.8" textLength="21.5" lengthAdjust="spacingAndGlyphs" fill="#000" text-anchor="start">0.5V</text>
<text x="971.6" y="524.0" font-family="Liberation Sans, sans-serif" font-size="11.8" textLength="34.4" lengthAdjust="spacingAndGlyphs" fill="#000" text-anchor="start">100mV</text>
<text x="1123.4" y="525.0" font-family="Liberation Sans, sans-serif" font-size="11.8" textLength="11.6" lengthAdjust="spacingAndGlyphs" fill="#000" text-anchor="start">1V</text>
<text x="964.2" y="571.2" font-family="Liberation Sans, sans-serif" font-size="11.8" textLength="28.2" lengthAdjust="spacingAndGlyphs" fill="#000" text-anchor="start">50mV</text>
<text x="1138.7" y="572.3" font-family="Liberation Sans, sans-serif" font-size="11.8" textLength="12.1" lengthAdjust="spacingAndGlyphs" fill="#000" text-anchor="start">2V</text>
<text x="1125.3" y="624.0" font-family="Liberation Sans, sans-serif" font-size="11.8" textLength="12.4" lengthAdjust="spacingAndGlyphs" fill="#000" text-anchor="start">5V</text>
<text x="1059" y="192" font-family="Liberation Sans, sans-serif" font-size="13.500" font-weight="bold" text-anchor="middle" fill="#b48686">Time</text>
<text x="1041.7" y="392.8" font-family="Liberation Sans, sans-serif" font-size="14" textLength="42.0" lengthAdjust="spacingAndGlyphs" fill="#b98585" text-anchor="start">CH1(V)</text>
<text x="1043.5" y="573.7" font-family="Liberation Sans, sans-serif" font-size="14" textLength="41.0" lengthAdjust="spacingAndGlyphs" fill="#b98585" text-anchor="start">CH2(V)</text>
</svg>
<div class="abs" style="left:0;top:1px;width:1px;height:601px;background:#5c5c5c"></div><div class="abs" style="left:1px;top:1px;width:1px;height:601px;background:#f8f8f8"></div>
<div class="abs" style="left:165px;top:126px;width:53px;height:22px;border:1px solid #adadad;background:#e1e1e1;"><svg width="10" height="6" viewBox="0 0 10 6" style="position:absolute;right:5px;top:8px"><path d="M0.5 0.5L5 5L9.5 0.5" stroke="#444" stroke-width="1.1" fill="none"/></svg></div><div class="t" style="left:169.3px;top:129.71px;font-size:11.8px;line-height:15px;transform:scaleX(0.9575);transform-origin:0 50%;">50ns</div>
<div class="abs" style="left:125px;top:152px;width:56px;height:22px;border:1px solid #adadad;background:#e1e1e1;"><svg width="10" height="6" viewBox="0 0 10 6" style="position:absolute;right:5px;top:8px"><path d="M0.5 0.5L5 5L9.5 0.5" stroke="#444" stroke-width="1.1" fill="none"/></svg></div><div class="t" style="left:135.2px;top:155.71px;font-size:11.8px;line-height:15px;transform:scaleX(0.9645);transform-origin:0 50%;">1ms</div>
<div class="abs" style="left:222px;top:0;width:2px;height:601px;background:#fafafa"></div>
<div class="abs" style="left:227px;top:0px;width:181px;height:240px;background:#fff;border:1px solid #828790;border-top-color:#9a9a9a"></div>
<div class="t" style="left:235.5px;top:8.41px;font-size:11.8px;line-height:15px;letter-spacing:0.263px;">Items</div><div class="t" style="left:314.6px;top:8.41px;font-size:11.8px;line-height:15px;letter-spacing:0.002px;">Properties</div>
<div class="abs" style="left:307px;top:3px;width:1px;height:24px;background:#e5e5e5"></div><div class="abs" style="left:405px;top:3px;width:1px;height:24px;background:#e5e5e5"></div>
<div class="t" style="left:235.3px;top:29.21px;font-size:11.8px;line-height:15px;letter-spacing:0.390px;">Model</div><div class="t" style="left:314.6px;top:29.21px;font-size:11.8px;line-height:15px;transform:scaleX(0.8834);transform-origin:0 50%;">DDS120</div>
<div class="abs" style="left:233px;top:45px;width:173px;height:18px;background:#f5f5f5"></div>
<div class="t" style="left:235.3px;top:47.21px;font-size:11.8px;line-height:15px;letter-spacing:0.024px;">Channel</div><div class="t" style="left:314.6px;top:47.21px;font-size:11.8px;line-height:15px;transform:scaleX(0.8049);transform-origin:0 50%;">CH1</div>
<div class="t" style="left:235.3px;top:65.21px;font-size:11.8px;line-height:15px;transform:scaleX(0.9799);transform-origin:0 50%;">State</div><div class="t" style="left:314.6px;top:65.21px;font-size:11.8px;line-height:15px;letter-spacing:-0.027px;">Stopped</div>
<div class="abs" style="left:233px;top:81px;width:173px;height:18px;background:#f5f5f5"></div>
<div class="t" style="left:235.3px;top:83.21px;font-size:11.8px;line-height:15px;letter-spacing:-0.051px;">Sample Rate</div><div class="t" style="left:314.6px;top:83.21px;font-size:11.8px;line-height:15px;transform:scaleX(0.8595);transform-origin:0 50%;">240K Hz</div>
<div class="t" style="left:235.3px;top:101.21px;font-size:11.8px;line-height:15px;transform:scaleX(0.9621);transform-origin:0 50%;">Trigger State</div><div class="t" style="left:314.6px;top:101.21px;font-size:11.8px;line-height:15px;transform:scaleX(0.9657);transform-origin:0 50%;">No Trigger</div>
<div class="abs" style="left:233px;top:117px;width:173px;height:18px;background:#f5f5f5"></div>
<div class="t" style="left:235.3px;top:119.21px;font-size:11.8px;line-height:15px;transform:scaleX(0.9496);transform-origin:0 50%;">Probe</div><div class="t" style="left:314.6px;top:119.21px;font-size:11.8px;line-height:15px;transform:scaleX(0.8459);transform-origin:0 50%;">1X (CH1)</div>
<div class="t" style="left:235.3px;top:137.21px;font-size:11.8px;line-height:15px;transform:scaleX(0.9496);transform-origin:0 50%;">Probe</div><div class="t" style="left:314.6px;top:137.21px;font-size:11.8px;line-height:15px;transform:scaleX(0.8459);transform-origin:0 50%;">1X (CH2)</div>
<div class="abs" style="left:231px;top:243px;width:169px;height:254px;background:#fff;border-left:1px solid #828790;border-top:1px solid #828790"></div>
<div class="abs" style="left:399px;top:243px;width:11px;height:253px;background:#f0f0f0"></div>
<div class="abs" style="left:399px;top:260px;width:11px;height:204px;background:#cdcdcd"></div>
<svg class="abs" style="left:401px;top:248px" width="9" height="6" viewBox="0 0 9 6"><path d="M.5 5L4.500 1L8.500 5" stroke="#555" stroke-width="1.300" fill="none"/></svg>
<svg class="abs" style="left:401px;top:484px" width="9" height="6" viewBox="0 0 9 6"><path d="M.5 1L4.500 5L8.500 1" stroke="#555" stroke-width="1.300" fill="none"/></svg>
<div class="t" style="left:239.5px;top:250.11px;font-size:11.8px;line-height:15px;transform:scaleX(0.9849);transform-origin:0 50%;">Name</div><div class="t" style="left:301.5px;top:250.11px;font-size:11.8px;line-height:15px;letter-spacing:0.372px;">Uint</div><div class="t" style="left:336.3px;top:250.11px;font-size:11.8px;line-height:15px;letter-spacing:0.149px;">Value</div>
<div class="abs" style="left:237px;top:269px;width:162px;height:18px;background:#f5f5f5"></div>
<div class="t" style="left:239.5px;top:271.21px;font-size:11.8px;line-height:15px;transform:scaleX(0.9645);transform-origin:0 50%;">Max</div><div class="t" style="left:301.5px;top:271.21px;font-size:11.8px;line-height:15px;transform:scaleX(0.8132);transform-origin:0 50%;">V</div><div class="t" style="left:336.3px;top:271.21px;font-size:11.8px;line-height:15px;transform:scaleX(0.8839);transform-origin:0 50%;">5.219</div>
<div class="t" style="left:239.5px;top:289.21px;font-size:11.8px;line-height:15px;letter-spacing:0.443px;">Min</div><div class="t" style="left:301.5px;top:289.21px;font-size:11.8px;line-height:15px;transform:scaleX(0.8132);transform-origin:0 50%;">V</div><div class="t" style="left:336.3px;top:289.21px;font-size:11.8px;line-height:15px;transform:scaleX(0.8839);transform-origin:0 50%;">4.909</div>
<div class="abs" style="left:237px;top:305px;width:162px;height:18px;background:#f5f5f5"></div>
<div class="t" style="left:239.5px;top:307.21px;font-size:11.8px;line-height:15px;transform:scaleX(0.7778);transform-origin:0 50%;">P-P</div><div class="t" style="left:301.5px;top:307.21px;font-size:11.8px;line-height:15px;transform:scaleX(0.8132);transform-origin:0 50%;">V</div><div class="t" style="left:336.3px;top:307.21px;font-size:11.8px;line-height:15px;transform:scaleX(0.8839);transform-origin:0 50%;">0.310</div>
<div class="t" style="left:239.5px;top:325.21px;font-size:11.8px;line-height:15px;transform:scaleX(0.9480);transform-origin:0 50%;">Freq</div><div class="t" style="left:301.5px;top:325.21px;font-size:11.8px;line-height:15px;transform:scaleX(0.8321);transform-origin:0 50%;">Hz</div><div class="t" style="left:336.3px;top:325.21px;font-size:11.8px;line-height:15px;transform:scaleX(0.8932);transform-origin:0 50%;">817.518</div>
<div class="abs" style="left:237px;top:341px;width:162px;height:18px;background:#f5f5f5"></div>
<div class="t" style="left:239.5px;top:343.21px;font-size:11.8px;line-height:15px;transform:scaleX(0.9580);transform-origin:0 50%;">Average</div><div class="t" style="left:301.5px;top:343.21px;font-size:11.8px;line-height:15px;transform:scaleX(0.8132);transform-origin:0 50%;">V</div><div class="t" style="left:336.3px;top:343.21px;font-size:11.8px;line-height:15px;transform:scaleX(0.8839);transform-origin:0 50%;">5.064</div>
<div class="t" style="left:239.5px;top:361.21px;font-size:11.8px;line-height:15px;letter-spacing:-0.042px;">Period</div><div class="t" style="left:301.5px;top:361.21px;font-size:11.8px;line-height:15px;transform:scaleX(0.9629);transform-origin:0 50%;">us</div><div class="t" style="left:336.3px;top:361.21px;font-size:11.8px;line-height:15px;transform:scaleX(0.9082);transform-origin:0 50%;">1223.214</div>
<div class="abs" style="left:237px;top:377px;width:162px;height:18px;background:#f5f5f5"></div>
<div class="t" style="left:239.5px;top:379.21px;font-size:11.8px;line-height:15px;letter-spacing:0.109px;">+Width</div><div class="t" style="left:301.5px;top:379.21px;font-size:11.8px;line-height:15px;transform:scaleX(0.9629);transform-origin:0 50%;">us</div><div class="t" style="left:336.3px;top:379.21px;font-size:11.8px;line-height:15px;transform:scaleX(0.9020);transform-origin:0 50%;">-85.813</div>
<div class="t" style="left:239.5px;top:397.21px;font-size:11.8px;line-height:15px;letter-spacing:0.282px;">-Width</div><div class="t" style="left:301.5px;top:397.21px;font-size:11.8px;line-height:15px;transform:scaleX(0.9629);transform-origin:0 50%;">us</div><div class="t" style="left:336.3px;top:397.21px;font-size:11.8px;line-height:15px;transform:scaleX(0.9021);transform-origin:0 50%;">1309.028</div>
<div class="abs" style="left:237px;top:413px;width:162px;height:18px;background:#f5f5f5"></div>
<div class="t" style="left:239.5px;top:415.21px;font-size:11.8px;line-height:15px;transform:scaleX(0.9663);transform-origin:0 50%;">Duty Rate</div><div class="t" style="left:301.5px;top:415.21px;font-size:11.8px;line-height:15px;transform:scaleX(0.6862);transform-origin:0 50%;">%</div><div class="t" style="left:336.3px;top:415.21px;font-size:11.8px;line-height:15px;transform:scaleX(0.9176);transform-origin:0 50%;">-7.015</div>
<div class="t" style="left:239.5px;top:433.21px;font-size:11.8px;line-height:15px;letter-spacing:0.073px;">RiseTime</div><div class="t" style="left:301.5px;top:433.21px;font-size:11.8px;line-height:15px;transform:scaleX(0.9629);transform-origin:0 50%;">us</div><div class="t" style="left:336.3px;top:433.21px;font-size:11.8px;line-height:15px;transform:scaleX(0.8940);transform-origin:0 50%;">0.000</div>
<div class="abs" style="left:237px;top:449px;width:162px;height:18px;background:#f5f5f5"></div>
<div class="t" style="left:239.5px;top:451.21px;font-size:11.8px;line-height:15px;transform:scaleX(0.9523);transform-origin:0 50%;">Vrms</div><div class="t" style="left:301.5px;top:451.21px;font-size:11.8px;line-height:15px;transform:scaleX(0.8132);transform-origin:0 50%;">V</div><div class="t" style="left:336.3px;top:451.21px;font-size:11.8px;line-height:15px;transform:scaleX(0.9214);transform-origin:0 50%;">0.110</div>
<div class="abs" style="left:295px;top:245px;width:1px;height:23px;background:#e5e5e5"></div><div class="abs" style="left:295px;top:269px;width:1px;height:198px;background:#fff"></div><div class="abs" style="left:295px;top:467px;width:1px;height:29px;background:#ececec"></div>
<div class="abs" style="left:330px;top:245px;width:1px;height:23px;background:#e5e5e5"></div><div class="abs" style="left:330px;top:269px;width:1px;height:198px;background:#fff"></div><div class="abs" style="left:330px;top:467px;width:1px;height:29px;background:#ececec"></div>
<div class="abs" style="left:232px;top:467px;width:167px;height:1px;background:#f0f0f0"></div><div class="abs" style="left:232px;top:485px;width:167px;height:1px;background:#f0f0f0"></div>
<div class="abs" style="left:231px;top:496px;width:179px;height:16px;background:#f0f0f0"></div>
<div class="abs" style="left:248px;top:496px;width:120px;height:15px;background:#cdcdcd"></div>
<svg class="abs" style="left:236px;top:499px" width="6" height="9" viewBox="0 0 6 9"><path d="M5 .5L1 4.500L5 8.500" stroke="#444" stroke-width="1.400" fill="none"/></svg>
<svg class="abs" style="left:388px;top:499px" width="6" height="9" viewBox="0 0 6 9"><path d="M1 .5L5 4.500L1 8.500" stroke="#444" stroke-width="1.400" fill="none"/></svg>
<div class="abs" style="left:227px;top:512px;width:183px;height:1px;background:#dcdcdc"></div>
<div class="abs" style="left:278px;top:515px;width:45px;height:19px;background:#f0f0f0;border:1px solid #d9d9d9;border-top:none"></div>
<div class="abs" style="left:228px;top:513px;width:50px;height:22px;background:#fff;border-right:1px solid #d9d9d9"></div>
<div class="t" style="left:235.0px;top:518.11px;font-size:11.8px;line-height:15px;transform:scaleX(0.8261);transform-origin:0 50%;">CH1</div><div class="t" style="left:283.0px;top:516.11px;font-size:11.8px;line-height:15px;transform:scaleX(0.8472);transform-origin:0 50%;">CH2</div>
<div class="abs" style="left:226px;top:537px;width:183px;height:63px;background:#e1e1e1;border:1px solid #adadad"></div>
<div class="abs" style="left:228px;top:539px;width:178px;height:58px;background:#4682b4"></div>
<div class="t" style="left:292.5px;top:553.80px;font-size:20.5px;line-height:27px;letter-spacing:0.298px;color:#fff;font-weight:bold;">Start</div>
</div>

<!-- STATUS BAR -->
<div id="status" class="abs" style="left:0;top:705px;width:1366px;height:23px;background:#f0f0f0"><div class="abs" style="left:0;top:1px;width:1366px;height:1px;background:#dcdcdc"></div></div>
<!-- TOOLTIP -->
<div class="abs" style="left:922px;top:567px;width:121px;height:19px;background:#fff;border:1px solid #767676;box-shadow:2px 2px 2px rgba(0,0,0,.35)"></div><div class="t" style="left:928.4px;top:569.11px;font-size:11.8px;line-height:15px;transform:scaleX(0.9753);transform-origin:0 50%;color:#575757;">Save as Jpg/Bmp/Gif</div>

<!-- TASKBAR -->
<div id="taskbar" class="abs" style="left:0;top:728px;width:1366px;height:40px;background:#16180f">
<svg class="abs" style="left:0;top:0" width="1366" height="40" viewBox="0 728 1366 40">
<defs>
<radialGradient id="tg1" cx=".5" cy=".5" r=".5"><stop offset="0" stop-color="#33421c" stop-opacity=".9"/><stop offset="1" stop-color="#33421c" stop-opacity="0"/></radialGradient>
<radialGradient id="tg2" cx=".5" cy=".5" r=".5"><stop offset="0" stop-color="#2a3216" stop-opacity=".8"/><stop offset="1" stop-color="#2a3216" stop-opacity="0"/></radialGradient>
<linearGradient id="fold" x1="0" y1="0" x2="0" y2="1"><stop offset="0" stop-color="#fbe08a"/><stop offset="1" stop-color="#f4c84a"/></linearGradient>
<filter id="forest" x="0" y="0" width="100%" height="100%" color-interpolation-filters="sRGB"><feTurbulence type="fractalNoise" baseFrequency="0.09 0.12" numOctaves="3" seed="4"/><feColorMatrix type="matrix" values="0 0 0 0 0.16  0 0 0 0 0.21  0 0 0 0 0.08  2.4 0 0 0 -1.0"/></filter>
</defs>
<rect x="0" y="728" width="1366" height="40" fill="#13170c"/>
<rect x="0" y="728" width="1366" height="40" fill="#000" filter="url(#forest)"/>
<ellipse cx="20" cy="745" rx="45" ry="28" fill="url(#tg1)"/>
<ellipse cx="700" cy="740" rx="120" ry="30" fill="url(#tg2)"/>
<ellipse cx="860" cy="750" rx="150" ry="30" fill="url(#tg2)"/>
<ellipse cx="1040" cy="745" rx="120" ry="30" fill="url(#tg2)"/>
<ellipse cx="1230" cy="740" rx="110" ry="32" fill="url(#tg1)"/>
<ellipse cx="1330" cy="750" rx="70" ry="30" fill="url(#tg2)"/>
<ellipse cx="470" cy="748" rx="60" ry="25" fill="url(#tg2)"/>
<ellipse cx="560" cy="735" rx="50" ry="20" fill="url(#tg2)"/>
<linearGradient id="dk" x1="0" y1="0" x2="1" y2="0"><stop offset="0" stop-color="#0b0e06" stop-opacity=".6"/><stop offset=".6" stop-color="#0b0e06" stop-opacity=".5"/><stop offset="1" stop-color="#0b0e06" stop-opacity="0"/></linearGradient><rect x="392" y="728" width="420" height="40" fill="url(#dk)"/>
<path d="M15.300 742.300L22 741.300V747.700H15.300ZM23 741.200L31 740V747.700H23ZM15.300 748.700H22V755.200L15.300 754.200ZM23 748.700H31V756.600L23 755.400Z" fill="#fff"/>
<rect x="48" y="728" width="344" height="40" fill="#363636"/>
<circle cx="67.700" cy="748.300" r="9.300" fill="none" stroke="#9a9a9a" stroke-width="3.600" opacity=".55"/>
<circle cx="67.700" cy="748.300" r="9.300" fill="none" stroke="#fff" stroke-width="2.300"/>
<text x="88.300" y="753.500" font-family="Liberation Sans, sans-serif" font-size="15" fill="#a6a6a6" textLength="195" lengthAdjust="spacingAndGlyphs">I'm Cortana. Ask me anything.</text>
<rect x="410.500" y="741.500" width="11" height="13" fill="none" stroke="#fff" stroke-width="1.300"/>
<path d="M408.500 743.500H406.500V752.500H408.500M423.500 743.500H425.500V752.500H423.500" fill="none" stroke="#fff" stroke-width="1.300"/>
<ellipse cx="462.500" cy="749" rx="8.500" ry="3.800" fill="#8c8c8c" opacity=".85"/>
<ellipse cx="463.400" cy="742.300" rx="8.800" ry="5.800" fill="#f6f6f6" stroke="#e02626" stroke-width="1.600" transform="rotate(-10 463.400 742.300)"/>
<path d="M459.600 738L469 751M465.500 738L464.800 751.500" stroke="#7e7e7e" stroke-width="1.700" stroke-linecap="round"/>
<ellipse cx="472.800" cy="752" rx="3.800" ry="2.400" fill="none" stroke="#2f9be4" stroke-width="1.800" transform="rotate(38 472.800 752)"/>
<ellipse cx="467" cy="755.300" rx="2.300" ry="3.600" fill="none" stroke="#2f9be4" stroke-width="1.800" transform="rotate(12 467 755.300)"/>
<circle cx="515" cy="747.700" r="11" fill="#dd4b3e"/>
<path d="M515 747.700L505.470 742.200A11 11 0 0 0 509.500 757.230Z" fill="#1da362"/>
<path d="M515 747.700L509.500 757.230A11 11 0 0 0 515 758.700A11 11 0 0 0 520.500 757.230Z" fill="#1da362"/>
<path d="M515 747.700H526A11 11 0 0 1 509.500 757.230Z" fill="#ffce44"/>
<path d="M515 747.700L505.470 742.200A11 11 0 0 0 509.500 757.230L515 747.700Z" fill="#1da362"/>
<circle cx="515" cy="747.700" r="5.200" fill="#f4f4f4"/><circle cx="515" cy="747.700" r="4.100" fill="#4a8af4"/>
<path d="M552.500 739H559.500L561 740.500H574.500V757H552.500Z" fill="#e9b83c"/>
<rect x="552.500" y="741.500" width="22" height="15.500" fill="url(#fold)"/>
<path d="M557 757V750H570.500V757H567.500V753H560V757Z" fill="#28a0e8"/>
<rect x="554" y="739.800" width="4" height="1" fill="#5ab0ea"/>
<rect x="589" y="728" width="48" height="40" fill="#4e523f"/>
<rect x="589" y="766" width="48" height="2" fill="#f7f3a6"/>
<rect x="601.700" y="736.800" width="22.500" height="22" fill="#fff" stroke="#000" stroke-width="1.500"/>
<path d="M604 748.200L610.600 742.600V751.700L617.200 742.600V751.700L622 746.300" fill="none" stroke="#000" stroke-width="1.600" stroke-linejoin="miter"/>
<path d="M1177 751L1183 745.200L1189 751" fill="none" stroke="#fff" stroke-width="1.300"/>
<rect x="1200.500" y="744.500" width="13" height="8.500" fill="none" stroke="#fff" stroke-width="1.200"/><rect x="1214" y="747" width="1.300" height="3.500" fill="#fff"/><rect x="1202.200" y="746.200" width="5.500" height="5" fill="#fff"/>
<path d="M1226.500 754.500A11 11 0 0 1 1237.500 743.500M1229.800 754.500A7.700 7.700 0 0 1 1237.500 746.800M1233 754.500A4.500 4.500 0 0 1 1237.500 750" fill="none" stroke="#fff" stroke-width="1.200"/><rect x="1235" y="752" width="3" height="3" fill="#fff"/>
<path d="M1247 746.500H1250L1254 742.500V755L1250 751H1247Z" fill="none" stroke="#fff" stroke-width="1.100"/><path d="M1256.500 746A4 4 0 0 1 1256.500 751.500" fill="none" stroke="#fff" stroke-width="1"/><path d="M1259 744A7 7 0 0 1 1259 753.500" fill="none" stroke="#bbb" stroke-width="1"/><path d="M1261.500 742A10 10 0 0 1 1261.500 755.500" fill="none" stroke="#777" stroke-width="1"/>
<path d="M1271.800 740.800H1286.500V748M1280 752.500H1271.800V740.800" fill="none" stroke="#fff" stroke-width="1.200"/><path d="M1274 744.500H1284.500M1274 747.500H1281" stroke="#fff" stroke-width="1"/><circle cx="1283" cy="752" r="3.600" fill="#14170d" stroke="#fff" stroke-width="1.100"/><path d="M1281 752H1285" stroke="#fff" stroke-width="1"/>
<text x="1326.500" y="743" text-anchor="middle" font-family="Liberation Sans, sans-serif" font-size="12" fill="#fff" textLength="41" lengthAdjust="spacingAndGlyphs">7:23 PM</text>
<text x="1326.700" y="760" text-anchor="middle" font-family="Liberation Sans, sans-serif" font-size="12" fill="#fff" textLength="51" lengthAdjust="spacingAndGlyphs">1/26/2016</text>
<rect x="1361.500" y="728" width="1" height="40" fill="#5a5a5a"/>
</svg>
</div>
<!-- END TASKBAR -->

</div>
</body>
</html>
